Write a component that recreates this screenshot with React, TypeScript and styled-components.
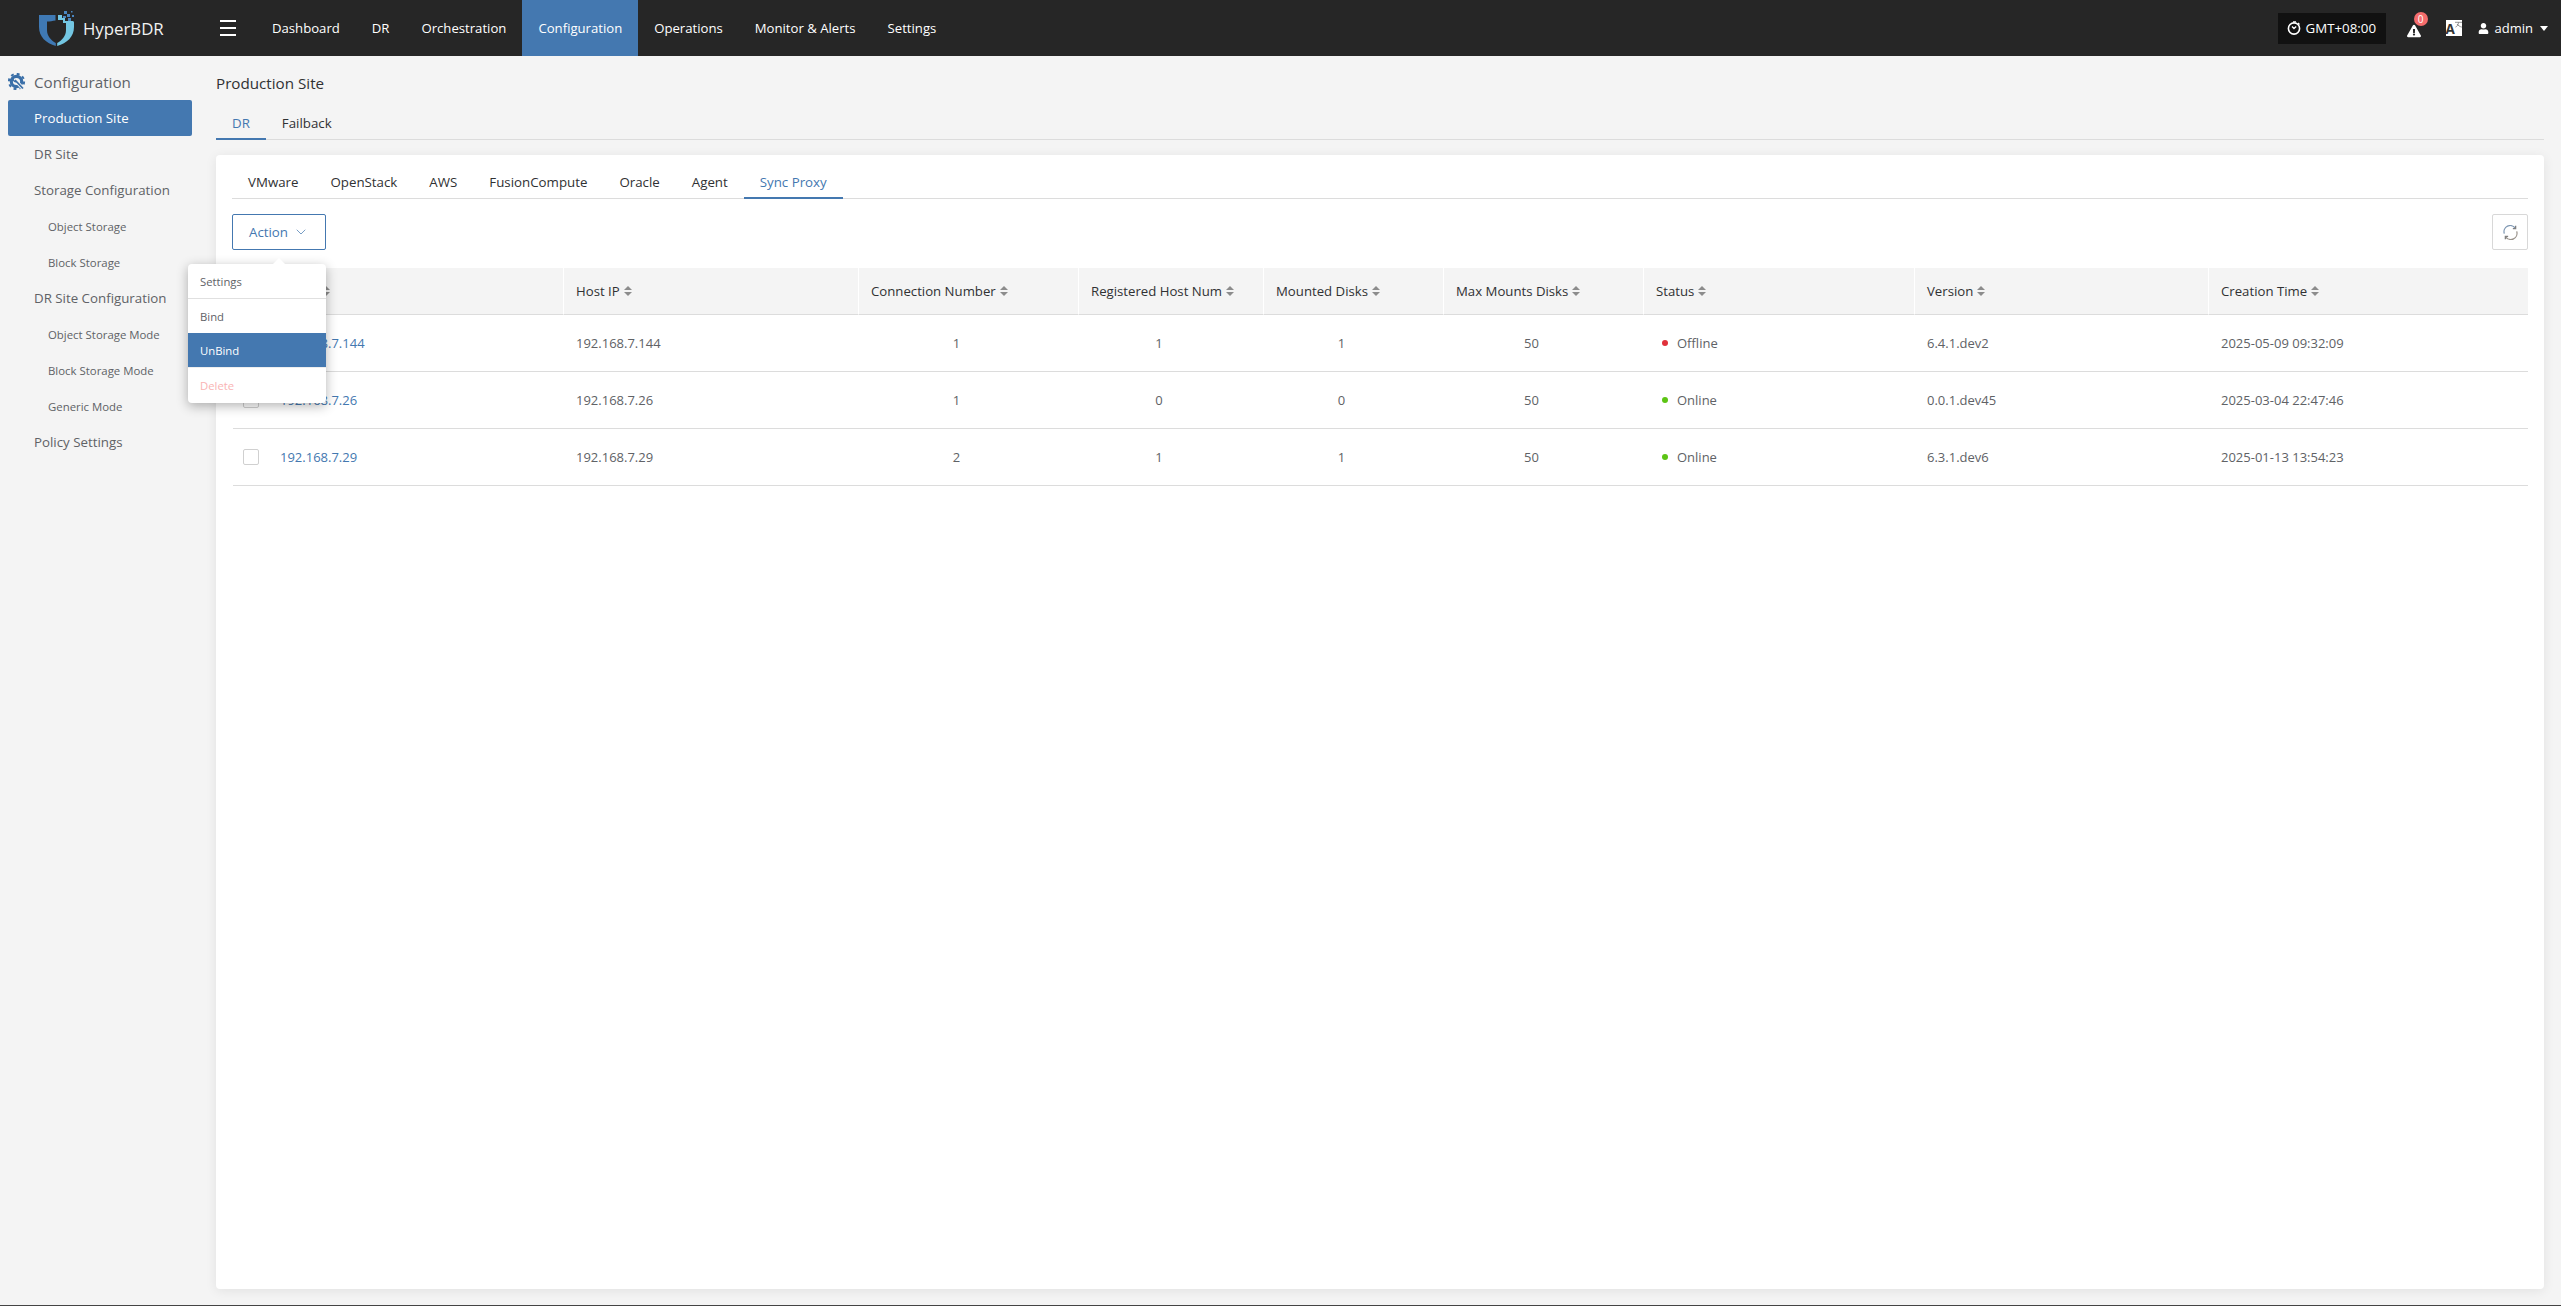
import * as React from 'react';
import styled, { createGlobalStyle } from 'styled-components';
import { ChevronDown } from 'lucide-react';
import { FaExclamationTriangle, FaUser } from 'react-icons/fa';

const blue = '#4478b0';

const GlobalStyle = createGlobalStyle`
    html, body {
        margin: 0;
        padding: 0;
        height: 100%;
        background: #f4f4f4;
    }
    #root {
        height: 100%;
    }
    * {
        box-sizing: border-box;
    }
`;

const Page = styled.div`
    height: 100vh;
    display: flex;
    flex-direction: column;
    font-family: "Open Sans", "Noto Sans", sans-serif;
    font-size: 13px;
    color: #606266;
    background: #f4f4f4;
    border-bottom: 1px solid #444;
    overflow: hidden;
`;

const Header = styled.header`
    height: 56px;
    flex: none;
    display: flex;
    align-items: stretch;
    background: #262626;
    color: #fff;
`;

const Brand = styled.div`
    width: 220px;
    padding-left: 39px;
    display: flex;
    align-items: center;
    gap: 8px;
    font-size: 16.8px;
    color: #f2f2f2;
`;

const Burger = styled.div`
    width: 16px;
    margin-right: 20px;
    display: flex;
    flex-direction: column;
    justify-content: center;
    gap: 5px;
    span {
        display: block;
        height: 2px;
        background: #fff;
    }
`;

const NavItem = styled.div<{ $active?: boolean }>`
    padding: 0 16px;
    display: flex;
    align-items: center;
    font-size: 13.15px;
    color: #fff;
    background: ${p => (p.$active ? blue : 'transparent')};
`;

const HeaderRight = styled.div`
    margin-left: auto;
    padding-right: 13px;
    display: flex;
    align-items: center;
`;

const Zone = styled.div`
    width: 108px;
    height: 31px;
    margin-right: 21px;
    padding-left: 9px;
    display: flex;
    align-items: center;
    gap: 5px;
    font-size: 13.3px;
    background: #111;
`;

const AlertWrap = styled.div`
    position: relative;
    width: 14px;
    height: 14px;
    margin-right: 25px;
    margin-top: 5px;
    display: flex;
    font-size: 14px;
`;

const Badge = styled.span`
    position: absolute;
    top: -12px;
    left: 7px;
    width: 14px;
    height: 14px;
    border-radius: 50%;
    background: #f56c6c;
    color: #fff;
    font-size: 10px;
    line-height: 14px;
    text-align: center;
`;

const Translate = styled.div`
    position: relative;
    width: 16px;
    height: 16px;
    margin-right: 16px;
    background: #fff;
    color: #333;
    font-size: 13.5px;
    font-weight: 700;
    line-height: 18px;
    svg {
        position: absolute;
        top: 1px;
        right: 0;
    }
`;

const UserMenu = styled.div`
    display: flex;
    align-items: center;
    font-size: 13px;
    svg {
        font-size: 11px;
        margin-right: 6px;
    }
`;

const Caret = styled.span`
    width: 0;
    height: 0;
    margin-left: 7px;
    border-left: 4.5px solid transparent;
    border-right: 4.5px solid transparent;
    border-top: 5px solid #fff;
`;

const Body = styled.div`
    flex: 1;
    min-height: 0;
    display: flex;
`;

const Sidebar = styled.aside`
    width: 216px;
    flex: none;
    padding: 8px 24px 0 8px;
`;

const SideTitle = styled.div`
    height: 36px;
    display: flex;
    align-items: center;
    gap: 8px;
    font-size: 15.2px;
    color: #5f6368;
`;

const SideItem = styled.div<{ $active?: boolean; $sub?: boolean }>`
    height: 36px;
    display: flex;
    align-items: center;
    padding-left: ${p => (p.$sub ? '40px' : '26px')};
    border-radius: 2px;
    font-size: ${p => (p.$sub ? '11.4px' : '13.3px')};
    color: ${p => (p.$active ? '#fff' : '#606266')};
    background: ${p => (p.$active ? blue : 'transparent')};
`;

const Main = styled.main`
    flex: 1;
    min-width: 0;
    display: flex;
    flex-direction: column;
    padding: 13px 17px 16px 0;
`;

const Title = styled.div`
    height: 28px;
    margin-bottom: 9px;
    display: flex;
    align-items: center;
    font-size: 15.2px;
    color: #303133;
`;

const TabBar = styled.div<{ $inner?: boolean }>`
    display: flex;
    flex: none;
    border-bottom: 1px solid #dcdcdc;
    margin-top: ${p => (p.$inner ? '10px' : '0')};
`;

const Tab = styled.div<{ $active?: boolean }>`
    height: 34px;
    margin-bottom: -1px;
    padding: 0 16px;
    display: flex;
    align-items: center;
    font-size: 13.3px;
    color: ${p => (p.$active ? blue : '#303133')};
    box-shadow: ${p => (p.$active ? `inset 0 -2px 0 ${blue}` : 'none')};
`;

const Card = styled.section`
    flex: 1;
    min-height: 0;
    margin-top: 15px;
    padding: 0 16px;
    background: #fff;
    border-radius: 4px;
    box-shadow: 0 2px 12px rgba(0, 0, 0, 0.08);
`;

const Toolbar = styled.div`
    margin-top: 15px;
    margin-bottom: 18px;
    display: flex;
    justify-content: space-between;
`;

const ActionWrap = styled.div`
    position: relative;
`;

const ActionButton = styled.button`
    width: 94px;
    height: 36px;
    padding: 0;
    display: flex;
    align-items: center;
    justify-content: center;
    gap: 5px;
    font: inherit;
    font-size: 13.3px;
    color: ${blue};
    background: #fff;
    border: 1px solid ${blue};
    border-radius: 2px;
`;

const Menu = styled.div`
    position: absolute;
    z-index: 5;
    top: 50px;
    left: -44px;
    width: 138px;
    background: #fff;
    border-radius: 4px;
    box-shadow: 0 3px 12px rgba(0, 0, 0, 0.3);
    &::before {
        content: '';
        position: absolute;
        top: -6px;
        left: 85px;
        border-left: 6px solid transparent;
        border-right: 6px solid transparent;
        border-bottom: 6px solid #fff;
    }
`;

const MenuItem = styled.div<{ $active?: boolean; $danger?: boolean; $divided?: boolean }>`
    height: ${p => (p.$divided ? '35px' : p.$danger ? '36px' : '34px')};
    padding-left: 12px;
    display: flex;
    align-items: center;
    font-size: 11.3px;
    color: ${p => (p.$active ? '#fff' : p.$danger ? '#f9b4b4' : '#606266')};
    background: ${p => (p.$active ? blue : 'transparent')};
    border-bottom: ${p => (p.$divided ? '1px solid #e0e0e0' : 'none')};
    border-top: ${p => (p.$danger ? '1px solid #eeeeee' : 'none')};
`;

const RefreshButton = styled.button`
    width: 36px;
    height: 36px;
    padding: 0;
    display: flex;
    align-items: center;
    justify-content: center;
    background: #fff;
    border: 1px solid #d8d8d8;
    border-radius: 2px;
`;

const Table = styled.table`
    width: 2295px;
    margin-left: 1px;
    table-layout: fixed;
    border-collapse: separate;
    border-spacing: 0;
`;

const Th = styled.th<{ $first?: boolean }>`
    height: 47px;
    padding: 0 0 0 ${p => (p.$first ? '48px' : '12px')};
    text-align: left;
    font-weight: 400;
    font-size: 13.2px;
    color: #303133;
    background: #f4f4f4;
    border-bottom: 1px solid #dcdcdc;
    border-right: 1px solid #fff;
    &:last-child {
        border-right: 0;
    }
`;

const Td = styled.td<{ $center?: boolean; $first?: boolean }>`
    height: 57px;
    padding: ${p => (p.$center ? '0 37px 0 12px' : p.$first ? '0 0 0 10px' : '0 0 0 12px')};
    text-align: ${p => (p.$center ? 'center' : 'left')};
    border-bottom: 1px solid #dcdcdc;
`;

const HeadCell = styled.span`
    display: inline-flex;
    align-items: center;
    gap: 4px;
`;

const Sort = styled.span`
    display: inline-flex;
    flex-direction: column;
    gap: 2px;
    &::before,
    &::after {
        content: '';
        border-left: 4px solid transparent;
        border-right: 4px solid transparent;
    }
    &::before {
        border-bottom: 4px solid #8c8c8c;
    }
    &::after {
        border-top: 4px solid #8c8c8c;
    }
`;

const Check = styled.span`
    display: inline-block;
    width: 16px;
    height: 16px;
    border: 1px solid #d0d0d0;
    border-radius: 2px;
    background: #fff;
`;

const NameCell = styled.div`
    display: flex;
    align-items: center;
    gap: 21px;
`;

const HostLink = styled.a`
    color: ${blue};
`;

const StatusCell = styled.div`
    display: flex;
    align-items: center;
    gap: 9px;
    padding-left: 6px;
`;

const Dot = styled.span<{ $online: boolean }>`
    width: 6px;
    height: 6px;
    border-radius: 50%;
    background: ${p => (p.$online ? '#5cc414' : '#e0313b')};
`;

const Logo = () => (
    <svg width="36" height="36" viewBox="0 0 36 36">
        <path d="M0 5H16.5V10.5C13.5 11 11 11.5 8 11.5V20C8 26 12 30.5 16.8 33V36C7 33 0 27 0 17Z" fill="#3f79b4" />
        <path d="M18.2 36V33C23 30.5 27 26 27 20V13H24V10H19V5H23V8H26V11H33.5C35 11 35 12 35 13V17C35 27 28 33 18.2 36Z" fill="#73c6e2" />
        <path d="M25 1h3v3h-3zM28 4h3v3h-3zM24 6h3v2h-3zM29 8h3v3h-3zM32 1h1.5v1.5H32zM33 5h2v2h-2z" fill="#4a86c0" />
    </svg>
);

const GearIcon = () => (
    <svg width="18" height="18" viewBox="0 0 18 18" fill="none">
        <circle cx="8.5" cy="8.5" r="5.2" stroke="#3a6fa8" strokeWidth="3.2" />
        <circle cx="8.5" cy="8.5" r="7.6" stroke="#3a6fa8" strokeWidth="2" strokeDasharray="2.9 3.07" />
        <path d="M7 7 14.5 15" stroke="#f4f4f4" strokeWidth="3.4" />
        <path d="M7 7 15 15.5" stroke="#3a6fa8" strokeWidth="1.8" />
        <path d="M5 5.4A3 3 0 0 0 8.8 8.6" stroke="#3a6fa8" strokeWidth="1.4" />
    </svg>
);

const ClockIcon = () => (
    <svg width="14" height="14" viewBox="0 0 14 14" fill="none" stroke="#fff">
        <circle cx="7" cy="7.5" r="5.6" strokeWidth="1.6" />
        <path d="M6 .8h3M11 2l1.5 1.5M5 5.5 7 7.5l2.2-2" strokeWidth="1.3" />
    </svg>
);

const RefreshIcon = () => (
    <svg width="15" height="15" viewBox="0 0 14 14" fill="none" strokeWidth="1.2">
        <path d="M1.2 8A5.8 5.8 0 0 1 11.5 3" stroke="#7f98b3" />
        <path d="M12.8 6A5.8 5.8 0 0 1 2.5 11" stroke="#9a938b" />
        <path d="M11.8.8V3.4H9.2M2.2 13.2V10.6H4.8" stroke="#808080" />
    </svg>
);

const navItems = ['Dashboard', 'DR', 'Orchestration', 'Configuration', 'Operations', 'Monitor & Alerts', 'Settings'];

const sideItems = [
    { label: 'Production Site', active: true },
    { label: 'DR Site' },
    { label: 'Storage Configuration' },
    { label: 'Object Storage', sub: true },
    { label: 'Block Storage', sub: true },
    { label: 'DR Site Configuration' },
    { label: 'Object Storage Mode', sub: true },
    { label: 'Block Storage Mode', sub: true },
    { label: 'Generic Mode', sub: true },
    { label: 'Policy Settings' },
];

const platformTabs = ['VMware', 'OpenStack', 'AWS', 'FusionCompute', 'Oracle', 'Agent', 'Sync Proxy'];

const columns = [
    { label: 'Name', width: 331 },
    { label: 'Host IP', width: 295 },
    { label: 'Connection Number', width: 220 },
    { label: 'Registered Host Num', width: 185 },
    { label: 'Mounted Disks', width: 180 },
    { label: 'Max Mounts Disks', width: 200 },
    { label: 'Status', width: 271 },
    { label: 'Version', width: 294 },
    { label: 'Creation Time', width: 319 },
];

const rows = [
    { ip: '192.168.7.144', conn: 1, reg: 1, mounted: 1, max: 50, online: false, version: '6.4.1.dev2', time: '2025-05-09 09:32:09' },
    { ip: '192.168.7.26', conn: 1, reg: 0, mounted: 0, max: 50, online: true, version: '0.0.1.dev45', time: '2025-03-04 22:47:46' },
    { ip: '192.168.7.29', conn: 2, reg: 1, mounted: 1, max: 50, online: true, version: '6.3.1.dev6', time: '2025-01-13 13:54:23' },
];

export default function App() {
    return (
        <Page>
            <GlobalStyle />
            <Header>
                <Brand>
                    <Logo />
                    HyperBDR
                </Brand>
                <Burger>
                    <span />
                    <span />
                    <span />
                </Burger>
                {navItems.map(item => (
                    <NavItem key={item} $active={item === 'Configuration'}>{item}</NavItem>
                ))}
                <HeaderRight>
                    <Zone>
                        <ClockIcon />
                        GMT+08:00
                    </Zone>
                    <AlertWrap>
                        <FaExclamationTriangle />
                        <Badge>0</Badge>
                    </AlertWrap>
                    <Translate>
                        A
                        <svg width="7" height="7" viewBox="0 0 7 6" stroke="#777" fill="none" strokeWidth="0.8">
                            <path d="M0 .8h7M3.5 .8C3.5 3 2 5 .5 5.6M2 2.5C3 4 5 5.2 6.8 5.6" />
                        </svg>
                    </Translate>
                    <UserMenu>
                        <FaUser />
                        admin
                        <Caret />
                    </UserMenu>
                </HeaderRight>
            </Header>
            <Body>
                <Sidebar>
                    <SideTitle>
                        <GearIcon />
                        Configuration
                    </SideTitle>
                    {sideItems.map(item => (
                        <SideItem key={item.label} $active={item.active} $sub={item.sub}>{item.label}</SideItem>
                    ))}
                </Sidebar>
                <Main>
                    <Title>Production Site</Title>
                    <TabBar>
                        <Tab $active>DR</Tab>
                        <Tab>Failback</Tab>
                    </TabBar>
                    <Card>
                        <TabBar $inner>
                            {platformTabs.map(tab => (
                                <Tab key={tab} $active={tab === 'Sync Proxy'}>{tab}</Tab>
                            ))}
                        </TabBar>
                        <Toolbar>
                            <ActionWrap>
                                <ActionButton>
                                    Action
                                    <ChevronDown size={16} strokeWidth={1.1} />
                                </ActionButton>
                                <Menu>
                                    <MenuItem $divided>Settings</MenuItem>
                                    <MenuItem>Bind</MenuItem>
                                    <MenuItem $active>UnBind</MenuItem>
                                    <MenuItem $danger>Delete</MenuItem>
                                </Menu>
                            </ActionWrap>
                            <RefreshButton>
                                <RefreshIcon />
                            </RefreshButton>
                        </Toolbar>
                        <Table>
                            <colgroup>
                                {columns.map(col => (
                                    <col key={col.label} width={col.width} />
                                ))}
                            </colgroup>
                            <thead>
                                <tr>
                                    {columns.map((col, i) => (
                                        <Th key={col.label} $first={i === 0}>
                                            <HeadCell>
                                                {col.label}
                                                <Sort />
                                            </HeadCell>
                                        </Th>
                                    ))}
                                </tr>
                            </thead>
                            <tbody>
                                {rows.map(row => (
                                    <tr key={row.ip}>
                                        <Td $first>
                                            <NameCell>
                                                <Check />
                                                <HostLink>{row.ip}</HostLink>
                                            </NameCell>
                                        </Td>
                                        <Td>{row.ip}</Td>
                                        <Td $center>{row.conn}</Td>
                                        <Td $center>{row.reg}</Td>
                                        <Td $center>{row.mounted}</Td>
                                        <Td $center>{row.max}</Td>
                                        <Td>
                                            <StatusCell>
                                                <Dot $online={row.online} />
                                                {row.online ? 'Online' : 'Offline'}
                                            </StatusCell>
                                        </Td>
                                        <Td>{row.version}</Td>
                                        <Td>{row.time}</Td>
                                    </tr>
                                ))}
                            </tbody>
                        </Table>
                    </Card>
                </Main>
            </Body>
        </Page>
    );
}
